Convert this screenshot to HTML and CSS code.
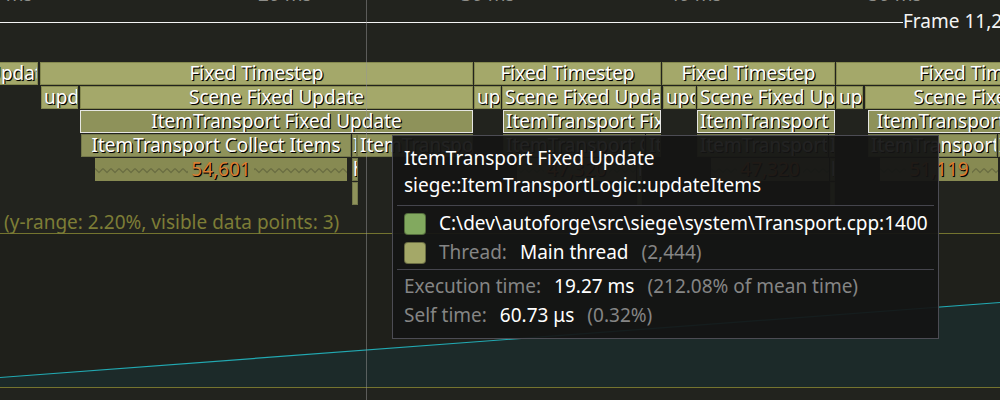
FILE: index.html
```html
<!DOCTYPE html>
<html>
<head>
<meta charset="utf-8">
<link rel="stylesheet" href="styles.css">
</head>
<body>
<svg class="defs" width="0" height="0" aria-hidden="true">
  <defs>
    <pattern id="zig" width="8" height="23" patternUnits="userSpaceOnUse">
      <path d="M0 10.5 L4 14.5 L8 10.5" stroke="#6b6e42" stroke-width="1.4" fill="none"/>
    </pattern>
  </defs>
</svg>
<div class="view">
  <div class="ruler">
    <span class="tick" style="left:-21px">10 ms</span>
    <span class="tick" style="left:258px">20 ms</span>
    <span class="tick" style="left:461px">30 ms</span>
    <span class="tick" style="left:668px">40 ms</span>
    <span class="tick" style="left:868px">50 ms</span>
  </div>

  <div class="frame-row">
    <div class="frame-line"></div>
    <span class="frame-label">Frame 11,2</span>
  </div>

  <div class="zones">
    <!-- level 1 -->
    <div class="zone r1" style="left:-16px;width:54px">Update</div>
    <div class="zone r1" style="left:40px;width:433px">Fixed Timestep</div>
    <div class="zone r1" style="left:474px;width:187px">Fixed Timestep</div>
    <div class="zone r1" style="left:662px;width:173px">Fixed Timestep</div>
    <div class="zone r1" style="left:836px;width:300px">Fixed Timestep</div>

    <!-- level 2 -->
    <div class="zone r2" style="left:41px;width:37px">update</div>
    <div class="zone r2" style="left:80px;width:393px">Scene Fixed Update</div>
    <div class="zone r2" style="left:474px;width:27px">update</div>
    <div class="zone r2" style="left:502px;width:159px">Scene Fixed Update</div>
    <div class="zone r2" style="left:663px;width:33px">update</div>
    <div class="zone r2" style="left:697px;width:138px">Scene Fixed Update</div>
    <div class="zone r2" style="left:836px;width:27px">update</div>
    <div class="zone r2" style="left:865px;width:272px">Scene Fixed Update</div>

    <!-- level 3 (hovered source location) -->
    <div class="zone r3 hl" style="left:80px;width:393px">ItemTransport Fixed Update</div>
    <div class="zone r3 hl" style="left:503px;width:158px">ItemTransport Fixed Update</div>
    <div class="zone r3 hl" style="left:697px;width:138px">ItemTransport Fixed Update</div>
    <div class="zone r3 hl" style="left:868px;width:268px">ItemTransport Fixed Update</div>

    <!-- level 4 -->
    <div class="zone r4 sub" style="left:81px;width:270px">ItemTransport Collect Items</div>
    <div class="zone r4 sub tiny" style="left:352px;width:5px">ItemTransport Update Items</div>
    <div class="zone r4 sub" style="left:357px;width:116px">ItemTransport Update Items</div>
    <div class="zone r4 sub" style="left:503px;width:142px">ItemTransport Collect Items</div>
    <div class="zone r4 sub" style="left:646px;width:15px">ItemTransport Update Items</div>
    <div class="zone r4 sub" style="left:697px;width:131px">ItemTransport Collect Items</div>
    <div class="zone r4 sub tiny" style="left:829px;width:6px">ItemTransport Update Items</div>
    <div class="zone r4 sub" style="left:868px;width:129px">ItemTransport Collect Items</div>
    <div class="zone r4 sub tiny" style="left:998px;width:20px">ItemTransport Update Items</div>

    <!-- level 5 -->
    <div class="zone r5 wavy" style="left:95px;width:252px"><svg class="zz"><rect width="100%" height="100%" fill="url(#zig)"/></svg><span class="count">54,601</span></div>
    <div class="zone r5 sub tiny" style="left:352px;width:6px">hash</div>
    <div class="zone r5 wavy" style="left:517px;width:119px"><svg class="zz"><rect width="100%" height="100%" fill="url(#zig)"/></svg><span class="count">47,320</span></div>
    <div class="zone r5 sub tiny" style="left:637px;width:5px">hash</div>
    <div class="zone r5 wavy" style="left:711px;width:118px"><svg class="zz"><rect width="100%" height="100%" fill="url(#zig)"/></svg><span class="count">47,320</span></div>
    <div class="zone r5 sub tiny" style="left:830px;width:5px">hash</div>
    <div class="zone r5 wavy" style="left:880px;width:118px"><svg class="zz"><rect width="100%" height="100%" fill="url(#zig)"/></svg><span class="count">51,119</span></div>

    <!-- level 6 -->
    <div class="zone r6 sub tiny" style="left:352px;width:6px"></div>
    <div class="zone r6 sub tiny" style="left:637px;width:5px"></div>
    <div class="zone r6 sub tiny" style="left:830px;width:5px"></div>
  </div>

  <div class="caption">(y-range: 2.20%, visible data points: 3)</div>

  <div class="plot">
    <svg class="plot-svg" viewBox="0 0 1000 153" preserveAspectRatio="none">
      <polygon points="0,143.5 1000,68.5 1000,153 0,153" fill="#1c2a29"/>
      <line x1="0" y1="143.5" x2="1000" y2="68.5" stroke="#22a9b2" stroke-width="1.2"/>
    </svg>
  </div>

  <div class="vline"></div>

  <div class="tooltip">
    <div class="tt-line">ItemTransport Fixed Update</div>
    <div class="tt-line">siege::ItemTransportLogic::updateItems</div>
    <div class="tt-sep first"></div>
    <div class="tt-row">
      <span class="swatch green"></span>
      <span>C:\dev\autoforge\src\siege\system\Transport.cpp:1400</span>
    </div>
    <div class="tt-row">
      <span class="swatch olive"></span>
      <span class="muted">Thread:</span>
      <span>Main thread</span>
      <span class="muted">(2,444)</span>
    </div>
    <div class="tt-sep second"></div>
    <div class="tt-row stat">
      <span class="muted">Execution time:</span>
      <span>19.27 ms</span>
      <span class="muted">(212.08% of mean time)</span>
    </div>
    <div class="tt-row stat">
      <span class="muted">Self time:</span>
      <span>60.73 μs</span>
      <span class="muted">(0.32%)</span>
    </div>
  </div>
</div>
</body>
</html>
```

FILE: styles.css
```css
html, body {
  margin: 0;
  padding: 0;
  background: #22231e;
}

body {
  font-family: "Noto Sans", "DejaVu Sans", sans-serif;
  font-size: 19px;
  color: #ffffff;
}

.defs {
  position: absolute;
  width: 0;
  height: 0;
}

.view {
  position: relative;
  width: 1000px;
  height: 400px;
  overflow: hidden;
  background: #22231e;
}

/* time ruler (only the bottom of the labels shows) */
.ruler {
  position: relative;
  height: 10px;
}

.tick {
  position: absolute;
  top: -17px;
  line-height: 23px;
  color: #8e8e8a;
  white-space: nowrap;
}

/* frame marker */
.frame-row {
  display: flex;
  align-items: flex-start;
  height: 24px;
  white-space: nowrap;
}

.frame-line {
  flex: none;
  width: 903px;
  height: 1px;
  margin-top: 12px;
  background: #f4f4f4;
}

.frame-label {
  flex: none;
  line-height: 23px;
  color: #f4f4f4;
}

/* zones */
.zones {
  position: relative;
  margin-top: 28px;
  height: 144px;
}

.zone {
  position: absolute;
  box-sizing: border-box;
  height: 23px;
  padding: 0 2px;
  border: 1px solid #858950;
  background: #a4a86a;
  color: #ffffff;
  line-height: 21px;
  text-align: center;
  white-space: nowrap;
  overflow: hidden;
  text-shadow: 1px 1px 0 #000, 1px 1px 1px rgba(0, 0, 0, 0.6);
}

.r1 { top: 0; }
.r2 { top: 24px; }
.r3 { top: 48px; }
.r4 { top: 72px; }
.r5 { top: 96px; }
.r6 { top: 120px; }

.zone.hl {
  background: #8e925a;
  border-color: #e6e6e2;
}

.zone.sub {
  background: #8e925a;
  border-color: #74784a;
}

.zone.tiny {
  padding: 0;
  text-align: left;
}

.zone.wavy {
  border: none;
  padding: 0;
  background: #878a52;
  line-height: 23px;
}

.zz {
  position: absolute;
  left: 0;
  top: 0;
  width: 100%;
  height: 100%;
}

.count {
  position: relative;
  padding: 0 3px;
  background: #878a52;
  color: #d87e33;
}

/* plot */
.caption {
  margin-top: 5px;
  padding-left: 4px;
  line-height: 22px;
  color: #7d7d36;
  white-space: nowrap;
}

.plot {
  height: 153px;
  border-top: 1px solid #74742f;
  border-bottom: 1px solid #74742f;
  background: #1f201b;
}

.plot-svg {
  display: block;
  width: 1000px;
  height: 153px;
}

/* hover line */
.vline {
  position: absolute;
  left: 366px;
  top: 0;
  width: 1px;
  height: 400px;
  background: rgba(150, 150, 150, 0.5);
}

/* tooltip */
.tooltip {
  position: absolute;
  left: 392px;
  top: 135px;
  box-sizing: border-box;
  width: 547px;
  height: 204px;
  padding: 9px 0 8px;
  border: 1px solid #4c4c54;
  background: rgba(20, 20, 20, 0.94);
  white-space: nowrap;
}

.tt-line {
  padding-left: 11px;
  line-height: 27px;
}

.tt-sep {
  height: 1px;
  margin: 0 4px;
  background: #45454d;
}

.tt-sep.first {
  margin-top: 6px;
  margin-bottom: 3px;
}

.tt-sep.second {
  margin-top: 2px;
  margin-bottom: 2px;
}

.tt-row {
  display: flex;
  align-items: center;
  column-gap: 13px;
  height: 29px;
  padding-left: 11px;
  line-height: 29px;
}

.muted {
  color: #858585;
}

.swatch {
  flex: none;
  width: 22px;
  height: 22px;
  border-radius: 4px;
  box-sizing: border-box;
  border: 1px solid rgba(0, 0, 0, 0.35);
}

.swatch.green { background: #82a95f; }
.swatch.olive { background: #a4a868; }
```
